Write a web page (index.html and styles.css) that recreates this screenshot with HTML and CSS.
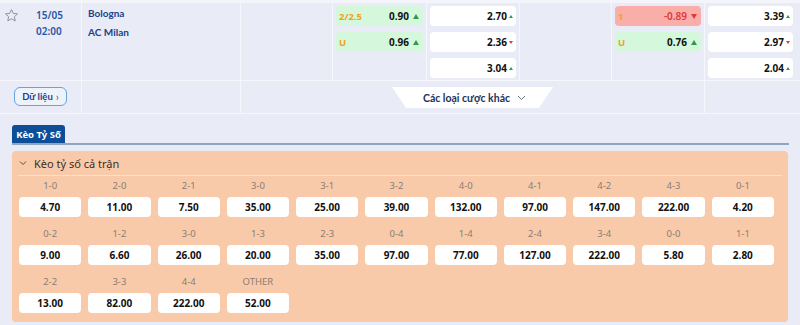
FILE: index.html
```html
<!DOCTYPE html>
<html lang="vi">
<head>
<meta charset="utf-8">
<title>Bologna - AC Milan</title>
<link rel="stylesheet" href="styles.css">
</head>
<body>
<div class="match">
  <div class="row main">
    <div class="c c-fav">
      <svg class="star" width="15" height="15" viewBox="0 0 24 24"><path d="M12 2.5l2.9 6.2 6.7.7-5 4.6 1.4 6.6L12 17.3l-6 3.3 1.4-6.6-5-4.6 6.7-.7z" fill="none" stroke="#8a8d96" stroke-width="1.5" stroke-linejoin="round"/></svg>
      <div class="time"><div>15/05</div><div>02:00</div></div>
    </div>
    <div class="c c-teams">
      <div class="team">Bologna</div>
      <div class="team">AC Milan</div>
    </div>
    <div class="c"></div>
    <div class="c c-odds">
      <div class="odd green"><span class="lbl">2/2.5</span><span class="val">0.90</span><i class="up"></i></div>
      <div class="odd green"><span class="lbl">U</span><span class="val">0.96</span><i class="up"></i></div>
    </div>
    <div class="c c-odds">
      <div class="odd white"><span class="val">2.70</span><i class="sup"></i></div>
      <div class="odd white"><span class="val">2.36</span><i class="sdown"></i></div>
      <div class="odd white"><span class="val">3.04</span><i class="sup"></i></div>
    </div>
    <div class="c"></div>
    <div class="c c-odds">
      <div class="odd red"><span class="lbl">1</span><span class="val neg">-0.89</span><i class="down"></i></div>
      <div class="odd green"><span class="lbl">U</span><span class="val">0.76</span><i class="up"></i></div>
    </div>
    <div class="c c-odds last">
      <div class="odd white"><span class="val">3.39</span><i class="sup"></i></div>
      <div class="odd white"><span class="val">2.97</span><i class="sdown"></i></div>
      <div class="odd white"><span class="val">2.04</span><i class="sup"></i></div>
    </div>
  </div>
  <div class="row sub">
    <div class="c c-btn"><button class="data-btn">Dữ liệu <span class="chev">›</span></button></div>
    <div class="c"></div>
    <div class="c c-more"><div class="more-tab">Các loại cược khác <svg width="9" height="6" viewBox="0 0 9 6"><path d="M1 1l3.5 3.5L8 1" fill="none" stroke="#6b7585" stroke-width="1"/></svg></div></div>
    <div class="c last"></div>
  </div>
</div>

<div class="scores">
  <div class="tabs"><div class="tab">Kèo Tỷ Số</div></div>
  <div class="panel">
    <div class="panel-head"><svg width="8" height="6" viewBox="0 0 8 6"><path d="M1 1.5l3 3 3-3" fill="none" stroke="#5a4a40" stroke-width="1"/></svg><span>Kèo tỷ số cả trận</span></div>
    <div class="grid">
      <div class="cell"><div class="sc">1-0</div><div class="pr">4.70</div></div>
      <div class="cell"><div class="sc">2-0</div><div class="pr">11.00</div></div>
      <div class="cell"><div class="sc">2-1</div><div class="pr">7.50</div></div>
      <div class="cell"><div class="sc">3-0</div><div class="pr">35.00</div></div>
      <div class="cell"><div class="sc">3-1</div><div class="pr">25.00</div></div>
      <div class="cell"><div class="sc">3-2</div><div class="pr">39.00</div></div>
      <div class="cell"><div class="sc">4-0</div><div class="pr">132.00</div></div>
      <div class="cell"><div class="sc">4-1</div><div class="pr">97.00</div></div>
      <div class="cell"><div class="sc">4-2</div><div class="pr">147.00</div></div>
      <div class="cell"><div class="sc">4-3</div><div class="pr">222.00</div></div>
      <div class="cell"><div class="sc">0-1</div><div class="pr">4.20</div></div>

      <div class="cell"><div class="sc">0-2</div><div class="pr">9.00</div></div>
      <div class="cell"><div class="sc">1-2</div><div class="pr">6.60</div></div>
      <div class="cell"><div class="sc">3-0</div><div class="pr">26.00</div></div>
      <div class="cell"><div class="sc">1-3</div><div class="pr">20.00</div></div>
      <div class="cell"><div class="sc">2-3</div><div class="pr">35.00</div></div>
      <div class="cell"><div class="sc">0-4</div><div class="pr">97.00</div></div>
      <div class="cell"><div class="sc">1-4</div><div class="pr">77.00</div></div>
      <div class="cell"><div class="sc">2-4</div><div class="pr">127.00</div></div>
      <div class="cell"><div class="sc">3-4</div><div class="pr">222.00</div></div>
      <div class="cell"><div class="sc">0-0</div><div class="pr">5.80</div></div>
      <div class="cell"><div class="sc">1-1</div><div class="pr">2.80</div></div>

      <div class="cell"><div class="sc">2-2</div><div class="pr">13.00</div></div>
      <div class="cell"><div class="sc">3-3</div><div class="pr">82.00</div></div>
      <div class="cell"><div class="sc">4-4</div><div class="pr">222.00</div></div>
      <div class="cell"><div class="sc">OTHER</div><div class="pr">52.00</div></div>
    </div>
  </div>
</div>
</body>
</html>
```
FILE: styles.css
```css
* { box-sizing: border-box; }
html, body { margin: 0; padding: 0; }
body {
  width: 800px;
  height: 325px;
  overflow: hidden;
  background: #e9ecf6;
  font-family: "Noto Sans", "Open Sans", sans-serif;
  color: #111;
}

.match { border-top: 3px solid #f4f5fb; }
.row { display: grid; border-bottom: 1px solid #f6f7fc; }
.row.main { grid-template-columns: 82px 159px 92px 94px 93px 92px 93px 95px; height: 78px; }
.row.sub { grid-template-columns: 82px 159px 464px 95px; height: 33px; }
.c { border-right: 1px solid #f6f7fc; }
.c.last { border-right: none; }

.c-fav { display: flex; padding: 5px 0 0 4px; }
.star { display: block; }
.time {
  margin-left: 17px;
  margin-top: -1px;
  font-size: 10px;
  font-weight: 600;
  color: #2a56a8;
  line-height: 16px;
}
.c-teams { padding: 1px 0 0 6px; }
.team {
  font-family: "Lato", "Noto Sans", sans-serif;
  font-size: 10px;
  font-weight: 700;
  color: #1c3f8c;
  line-height: 19px;
}

.c-odds { padding: 3px 3px 0 3px; display: flex; flex-direction: column; gap: 6px; }
.c-odds.last { padding-right: 7px; }
.odd {
  height: 20px;
  border-radius: 4px;
  display: flex;
  align-items: center;
  padding: 0 4px 0 3px;
  font-size: 10px;
  font-weight: 700;
}
.odd.green { background: #d5f7dc; }
.odd.red { background: #f9aeaa; }
.odd.white { background: #ffffff; justify-content: flex-end; padding-right: 3px; }
.lbl { color: #f0a224; font-weight: 700; font-size: 9.5px; margin-right: auto; }
.val { color: #111; }
.val.neg { color: #e0393a; font-weight: 600; }
.up, .down, .sup, .sdown { display: inline-block; width: 0; height: 0; margin-left: 4px; }
.up { border-left: 3px solid transparent; border-right: 3px solid transparent; border-bottom: 5px solid #2f9a4c; }
.down { border-left: 3px solid transparent; border-right: 3px solid transparent; border-top: 5px solid #e0393a; }
.sup { margin-left: 2px; border-left: 2px solid transparent; border-right: 2px solid transparent; border-bottom: 3px solid #2f9a4c; }
.sdown { margin-left: 2px; border-left: 2px solid transparent; border-right: 2px solid transparent; border-top: 3px solid #e0393a; }

.c-btn { padding: 6px 0 0 14px; }
.data-btn {
  width: 53px;
  height: 19px;
  border: 1px solid #67a3dc;
  border-radius: 6px;
  background: #eef3fb;
  font-family: "Lato", "Noto Sans", sans-serif;
  font-size: 9.5px;
  font-weight: 700;
  color: #1c3f8c;
  padding: 0;
  display: flex;
  align-items: center;
  justify-content: center;
  gap: 3px;
}
.chev { font-weight: 400; font-size: 11px; color: #4a5a78; line-height: 1; }
.c-more { display: flex; justify-content: center; padding-top: 6px; }
.more-tab {
  width: 161px;
  height: 21px;
  background: #ffffff;
  clip-path: polygon(0 0, 100% 0, 91.3% 100%, 8.7% 100%);
  display: flex;
  align-items: center;
  justify-content: center;
  gap: 7px;
  font-family: "Lato", "Noto Sans", sans-serif;
  font-size: 10.5px;
  font-weight: 700;
  color: #1c3357;
  padding-left: 4px;
}

.scores { padding: 11px 12px 0 12px; }
.tabs { border-bottom: 2px solid #8ea6be; display: flex; width: 777px; }
.tab {
  height: 18px;
  width: 53px;
  background: #0e4d98;
  border-radius: 3px 3px 0 0;
  color: #fff;
  font-size: 9.5px;
  font-weight: 700;
  display: flex;
  align-items: center;
  justify-content: center;
}
.panel {
  margin-top: 6px;
  height: 171px;
  background: #f8caa9;
  border-radius: 4px;
  padding: 0 6px;
}
.panel-head {
  height: 25px;
  border-bottom: 1px solid #fbe0cc;
  display: flex;
  align-items: center;
  gap: 7px;
  padding-left: 1px;
  font-size: 11px;
  color: #3b2e28;
}
.grid {
  width: 756px;
  padding: 3px 0 0 1px;
  display: grid;
  grid-template-columns: repeat(11, 1fr);
  column-gap: 7px;
  row-gap: 10px;
}
.sc {
  height: 14px;
  line-height: 14px;
  text-align: center;
  font-size: 9.5px;
  color: #8b7d74;
  margin-bottom: 4px;
}
.pr {
  height: 20px;
  background: #fff;
  border-radius: 4px;
  display: flex;
  align-items: center;
  justify-content: center;
  font-size: 10px;
  font-weight: 700;
  color: #111;
}
```
